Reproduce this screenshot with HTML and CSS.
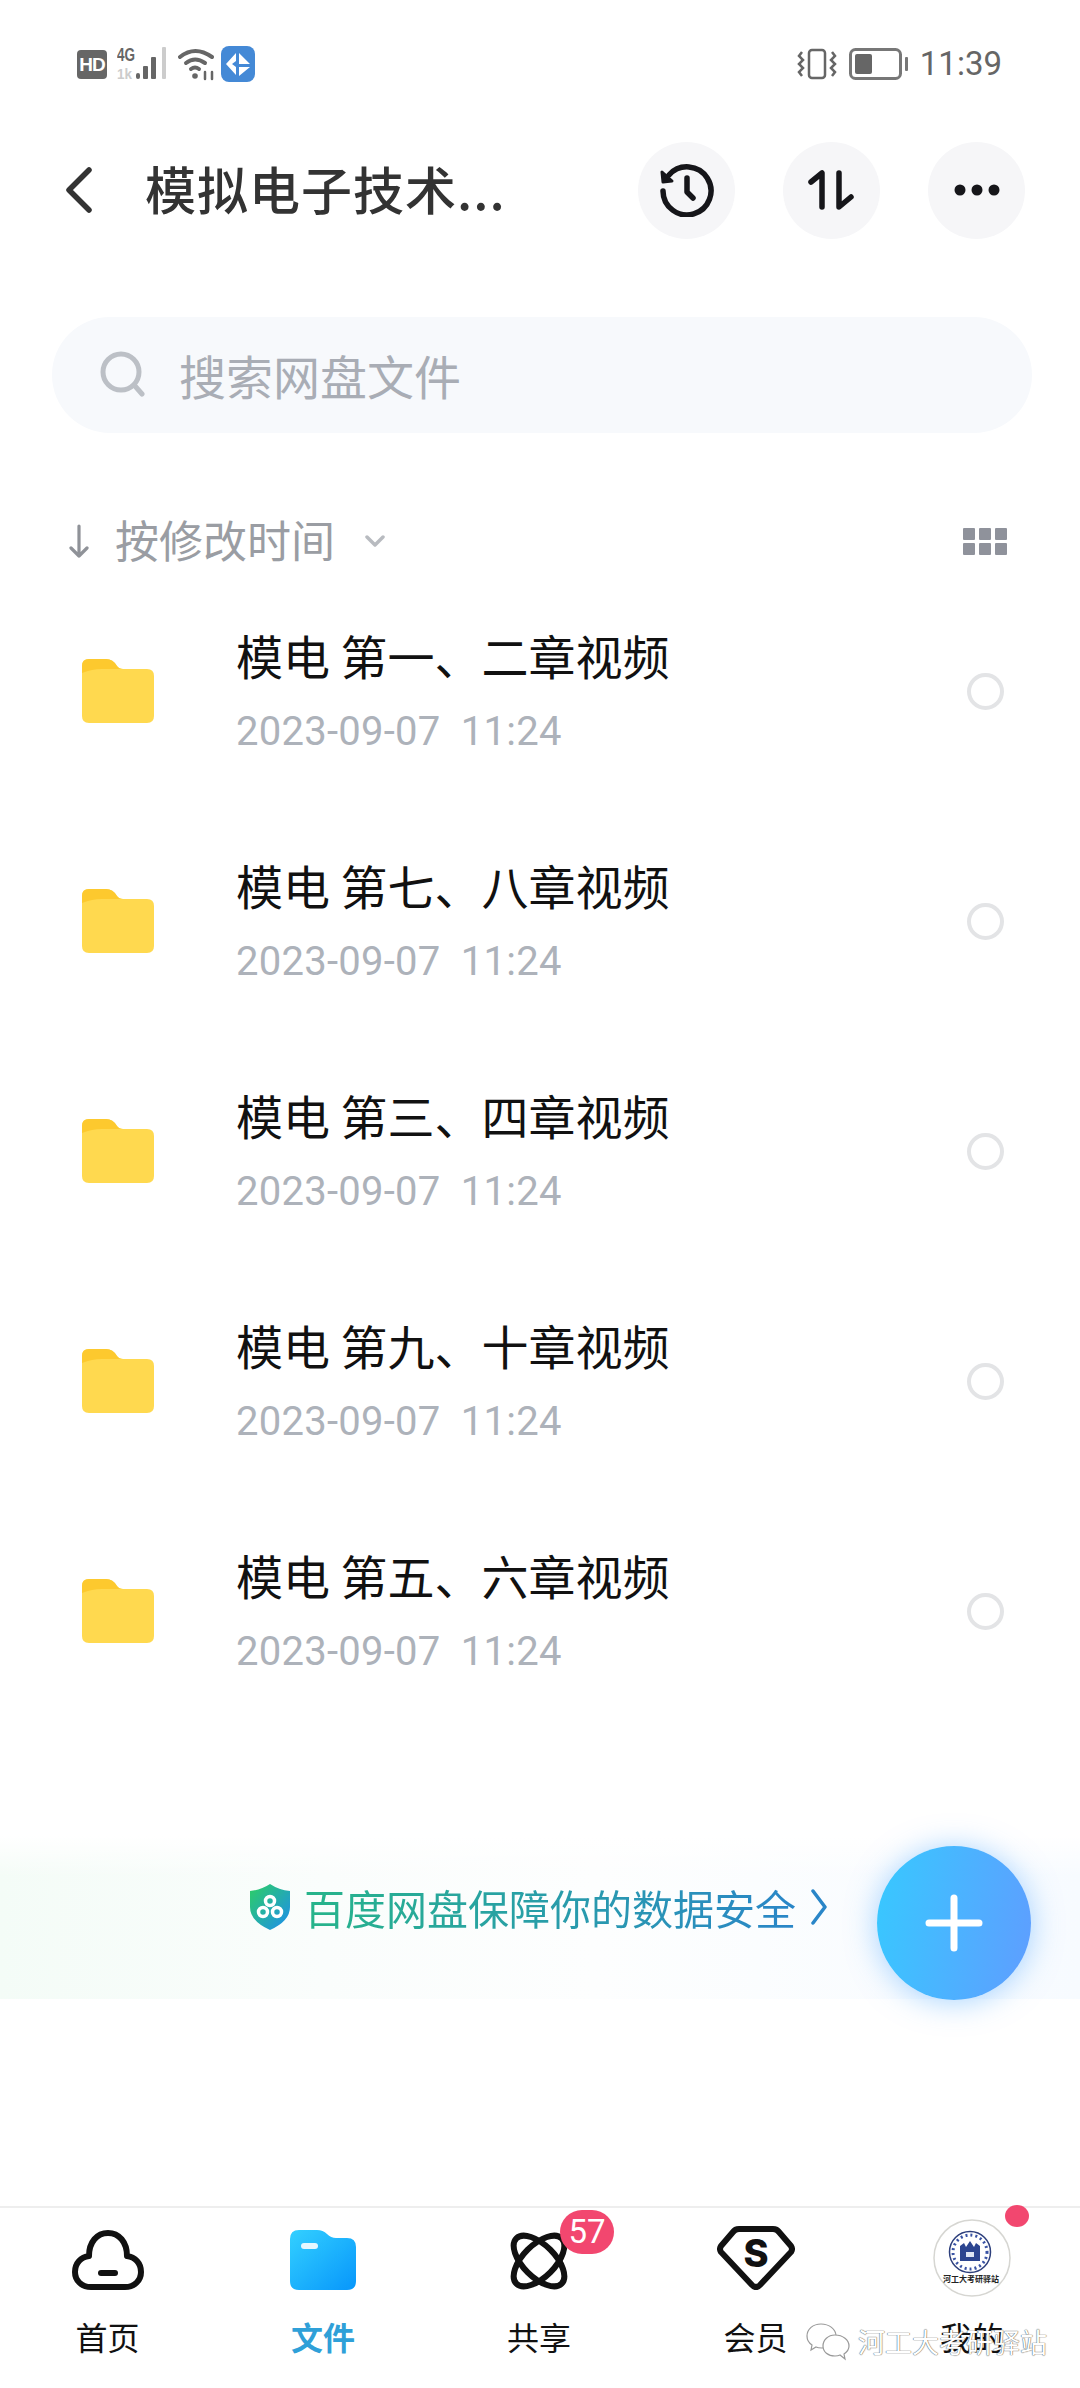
FILE: index.html
```html
<!DOCTYPE html>
<html lang="zh-CN">
<head>
  <meta charset="UTF-8">
  <meta name="viewport" content="width=device-width, initial-scale=1.0">
  <title>模拟电子技术</title>
  <link rel="stylesheet" href="styles.css">
</head>
<body>
<div class="page">
  <div class="status-bar">
    <div class="status-left">
      <span class="hd">HD</span>
      <svg class="signal" width="50" height="36" viewBox="0 0 50 36">
        <text x="0" y="15" class="net-top" textLength="18" lengthAdjust="spacingAndGlyphs">4G</text>
        <text x="0" y="33" class="net-low" textLength="15" lengthAdjust="spacingAndGlyphs">1k</text>
        <rect x="19" y="27" width="4" height="6" rx="2" fill="#666"/>
        <rect x="26" y="20" width="5" height="13" rx="1" fill="#666"/>
        <rect x="34" y="11" width="5" height="22" rx="1" fill="#666"/>
        <rect x="45" y="1" width="4" height="32" rx="1" fill="#ccc"/>
      </svg>
      <svg class="wifi" width="38" height="34" viewBox="0 0 38 34" fill="none" stroke="#666" stroke-width="4" stroke-linecap="round">
        <path d="M2 10 Q17 -2 34 10"/>
        <path d="M8 16 Q17 9 27 16"/>
        <path d="M13 22 Q17 19 21 22"/>
        <circle cx="17" cy="29" r="2.8" fill="#666" stroke="none"/>
        <path d="M27 25 v7 M34 25 v7" stroke-width="2.5"/>
      </svg>
      <svg class="app-icon" width="34" height="36" viewBox="0 0 34 36">
        <rect width="34" height="36" rx="8" fill="#4489d6"/>
        <path d="M5 18 L15 7 L15 15 L11 18 L15 21 L15 29 Z" fill="#fff"/>
        <path d="M18 7 L29 18 L18 18 Z M18 21 L29 21 L18 30 Z" fill="#fff"/>
      </svg>
    </div>
    <div class="status-right">
      <svg width="40" height="32" viewBox="0 0 40 32" fill="none" stroke="#666" stroke-width="2.5">
        <rect x="12" y="2" width="16" height="28" rx="3"/>
        <path d="M5 4 L2 8 L6 12 L2 16 L6 20 L2 24 L5 28 M35 4 L38 8 L34 12 L38 16 L34 20 L38 24 L35 28"/>
      </svg>
      <svg class="battery" width="60" height="32" viewBox="0 0 60 32">
        <rect x="1.5" y="1.5" width="50" height="29" rx="5" fill="none" stroke="#777" stroke-width="3"/>
        <rect x="6" y="6" width="17" height="20" rx="2" fill="#666"/>
        <rect x="56" y="9" width="3" height="14" rx="1" fill="#777"/>
      </svg>
      <span class="clock">11:39</span>
    </div>
  </div>

  <header class="top-bar">
    <svg class="back" width="30" height="48" viewBox="0 0 30 48" fill="none" stroke="#333" stroke-width="5.5" stroke-linecap="round" stroke-linejoin="round">
      <path d="M25 4 L5 24 L25 44"/>
    </svg>
    <h1 class="title">模拟电子技术...</h1>
    <div class="top-actions">
      <button class="round-btn">
        <svg width="54" height="54" viewBox="0 0 54 54" fill="none" stroke="#16161a" stroke-width="5.5" stroke-linecap="round" stroke-linejoin="round">
          <path d="M3 28 A24 24 0 1 0 9 12"/>
          <path d="M2 9 L3 19 L12 18 Z" fill="#16161a" stroke-width="3"/>
          <path d="M27 15 V29 L33 35"/>
        </svg>
      </button>
      <button class="round-btn">
        <svg width="48" height="48" viewBox="0 0 48 48" fill="none" stroke="#16161a" stroke-width="5.5" stroke-linecap="round" stroke-linejoin="round">
          <path d="M3 16 L14 7 V41"/>
          <path d="M31 7 V41 L43 31"/>
        </svg>
      </button>
      <button class="round-btn">
        <svg width="48" height="14" viewBox="0 0 48 14" fill="#16161a">
          <circle cx="7" cy="7" r="5.5"/><circle cx="24" cy="7" r="5.5"/><circle cx="41" cy="7" r="5.5"/>
        </svg>
      </button>
    </div>
  </header>

  <div class="search">
    <svg width="46" height="46" viewBox="0 0 46 46" fill="none" stroke="#bcc0c6" stroke-width="5" stroke-linecap="round">
      <circle cx="21" cy="21" r="18"/>
      <path d="M35 35 L42 43"/>
    </svg>
    <span>搜索网盘文件</span>
  </div>

  <div class="sort-row">
    <svg width="20" height="34" viewBox="0 0 20 34" fill="none" stroke="#8f9298" stroke-width="3.2" stroke-linecap="round" stroke-linejoin="round">
      <path d="M10 2 V32 M2 24 L10 32 L18 24"/>
    </svg>
    <span class="sort-label">按修改时间</span>
    <svg class="sort-caret" width="20" height="12" viewBox="0 0 20 12" fill="none" stroke="#b8bbc0" stroke-width="3.5" stroke-linecap="round" stroke-linejoin="round">
      <path d="M2 2 L10 10 L18 2"/>
    </svg>
    <div class="grid-icon">
      <i></i><i></i><i></i><i></i><i></i><i></i>
    </div>
  </div>

  <ul class="file-list">
    <li class="file-row">
      <svg class="folder" width="72" height="64" viewBox="0 0 72 64"><path d="M0 7 Q0 0 7 0 H24 Q31 0 35 7 Q37 10 41 10 H65 Q72 10 72 17 V57 Q72 64 65 64 H7 Q0 64 0 57 Z" fill="#ffd94f"/><path d="M0 7 Q0 0 7 0 H24 Q31 0 35 7 Q37 10 41 10 H20 Q10 10 0 14 Z" fill="#fdc92e"/></svg>
      <div class="file-info">
        <div class="file-name">模电 第一、二章视频</div>
        <div class="file-date">2023-09-07&nbsp; 11:24</div>
      </div>
      <span class="radio"></span>
    </li>
    <li class="file-row">
      <svg class="folder" width="72" height="64" viewBox="0 0 72 64"><path d="M0 7 Q0 0 7 0 H24 Q31 0 35 7 Q37 10 41 10 H65 Q72 10 72 17 V57 Q72 64 65 64 H7 Q0 64 0 57 Z" fill="#ffd94f"/><path d="M0 7 Q0 0 7 0 H24 Q31 0 35 7 Q37 10 41 10 H20 Q10 10 0 14 Z" fill="#fdc92e"/></svg>
      <div class="file-info">
        <div class="file-name">模电 第七、八章视频</div>
        <div class="file-date">2023-09-07&nbsp; 11:24</div>
      </div>
      <span class="radio"></span>
    </li>
    <li class="file-row">
      <svg class="folder" width="72" height="64" viewBox="0 0 72 64"><path d="M0 7 Q0 0 7 0 H24 Q31 0 35 7 Q37 10 41 10 H65 Q72 10 72 17 V57 Q72 64 65 64 H7 Q0 64 0 57 Z" fill="#ffd94f"/><path d="M0 7 Q0 0 7 0 H24 Q31 0 35 7 Q37 10 41 10 H20 Q10 10 0 14 Z" fill="#fdc92e"/></svg>
      <div class="file-info">
        <div class="file-name">模电 第三、四章视频</div>
        <div class="file-date">2023-09-07&nbsp; 11:24</div>
      </div>
      <span class="radio"></span>
    </li>
    <li class="file-row">
      <svg class="folder" width="72" height="64" viewBox="0 0 72 64"><path d="M0 7 Q0 0 7 0 H24 Q31 0 35 7 Q37 10 41 10 H65 Q72 10 72 17 V57 Q72 64 65 64 H7 Q0 64 0 57 Z" fill="#ffd94f"/><path d="M0 7 Q0 0 7 0 H24 Q31 0 35 7 Q37 10 41 10 H20 Q10 10 0 14 Z" fill="#fdc92e"/></svg>
      <div class="file-info">
        <div class="file-name">模电 第九、十章视频</div>
        <div class="file-date">2023-09-07&nbsp; 11:24</div>
      </div>
      <span class="radio"></span>
    </li>
    <li class="file-row">
      <svg class="folder" width="72" height="64" viewBox="0 0 72 64"><path d="M0 7 Q0 0 7 0 H24 Q31 0 35 7 Q37 10 41 10 H65 Q72 10 72 17 V57 Q72 64 65 64 H7 Q0 64 0 57 Z" fill="#ffd94f"/><path d="M0 7 Q0 0 7 0 H24 Q31 0 35 7 Q37 10 41 10 H20 Q10 10 0 14 Z" fill="#fdc92e"/></svg>
      <div class="file-info">
        <div class="file-name">模电 第五、六章视频</div>
        <div class="file-date">2023-09-07&nbsp; 11:24</div>
      </div>
      <span class="radio"></span>
    </li>
  </ul>

  <div class="safe-banner">
    <svg width="42" height="48" viewBox="0 0 42 48">
      <defs>
        <linearGradient id="shield" x1="0" y1="0" x2="1" y2="1">
          <stop offset="0" stop-color="#2dcf63"/>
          <stop offset="1" stop-color="#1d8df0"/>
        </linearGradient>
      </defs>
      <path d="M21 1 Q30 7 41 8 V24 Q41 38 21 47 Q1 38 1 24 V8 Q12 7 21 1 Z" fill="url(#shield)"/>
      <g fill="none" stroke="#fff" stroke-width="3.5">
        <circle cx="21" cy="18" r="4.5"/><circle cx="14" cy="29" r="4.5"/><circle cx="28" cy="29" r="4.5"/>
      </g>
    </svg>
    <span class="safe-text">百度网盘保障你的数据安全</span>
    <svg width="18" height="36" viewBox="0 0 18 36" fill="none" stroke="#2a86c8" stroke-width="3.5" stroke-linecap="round" stroke-linejoin="round">
      <path d="M3 2 L15 18 L3 34"/>
    </svg>
  </div>

  <button class="fab">
    <svg width="58" height="58" viewBox="0 0 58 58" stroke="#fff" stroke-width="7" stroke-linecap="round">
      <path d="M29 4 V54 M4 29 H54"/>
    </svg>
  </button>

  <nav class="tab-bar">
    <div class="tab">
      <svg width="72" height="60" viewBox="0 0 72 60" fill="none" stroke="#111" stroke-width="6" stroke-linecap="round" stroke-linejoin="round">
        <path d="M19 57 H53 C63 57 69 50 69 42 C69 33 63 27 55 26 C55 12 47 3 36 3 C25 3 17 12 17 26 C9 27 3 33 3 42 C3 50 9 57 19 57 Z"/>
        <path d="M29 43 H43"/>
      </svg>
      <span>首页</span>
    </div>
    <div class="tab active">
      <svg width="66" height="60" viewBox="0 0 66 60">
        <defs>
          <linearGradient id="tabFolder" x1="0" y1="0" x2="1" y2="1">
            <stop offset="0" stop-color="#33d0ff"/>
            <stop offset="1" stop-color="#0796fb"/>
          </linearGradient>
        </defs>
        <path d="M0 9 Q0 0 9 0 H27 Q33 0 37 4 Q41 8 46 8 H57 Q66 8 66 17 V51 Q66 60 57 60 H9 Q0 60 0 51 Z" fill="url(#tabFolder)"/>
        <rect x="11" y="13" width="17" height="6" rx="3" fill="#e4f7ff"/>
      </svg>
      <span>文件</span>
    </div>
    <div class="tab">
      <div class="tab-icon">
        <svg width="58" height="58" viewBox="0 0 58 58" fill="none" stroke="#111" stroke-width="6">
          <ellipse cx="29" cy="29" rx="32" ry="16" transform="rotate(45 29 29)"/>
          <ellipse cx="29" cy="29" rx="32" ry="16" transform="rotate(-45 29 29)"/>
        </svg>
        <span class="count-badge">57</span>
      </div>
      <span>共享</span>
    </div>
    <div class="tab">
      <svg width="78" height="64" viewBox="0 0 78 64" fill="none" stroke="#111" stroke-width="6" stroke-linejoin="round">
        <path d="M22 3 H56 Q60 3 62 6 L74 20 Q76 23 74 26 L43 59 Q39 63 35 59 L4 26 Q2 23 4 20 L16 6 Q18 3 22 3 Z"/>
        <text x="39" y="41" class="vip-s">S</text>
      </svg>
      <span>会员</span>
    </div>
    <div class="tab">
      <div class="tab-icon avatar">
        <svg width="78" height="78" viewBox="0 0 78 78">
          <circle cx="39" cy="39" r="38" fill="#fff" stroke="#d6d6d2" stroke-width="1.5"/>
          <circle cx="37" cy="33" r="20.5" fill="#fff" stroke="#2d3f7c" stroke-width="1.5"/>
          <circle cx="37" cy="33" r="17" fill="none" stroke="#3953a4" stroke-width="3" stroke-dasharray="2 3"/>
          <path d="M27 42 V27 L31 24 L33 28 L37 22 L41 28 L43 24 L47 27 V42 Z" fill="#2c4590"/>
          <rect x="33" y="33" width="8" height="5" fill="#dfe6f5"/>
          <text x="38" y="63" class="avatar-text">河工大考研驿站</text>
        </svg>
        <span class="dot"></span>
      </div>
      <span>我的</span>
    </div>
  </nav>

  <div class="watermark">
    <svg width="44" height="38" viewBox="0 0 44 38" fill="#fff" stroke="#999" stroke-width="1.2">
      <path d="M15 1 C7 1 1 6 1 13 C1 17 3 20 6 22 L5 27 L10 24 C12 25 14 25 16 25 C23 25 30 20 30 13 C30 6 23 1 15 1 Z"/>
      <path d="M29 12 C22 12 17 17 17 23 C17 29 22 33 29 33 C31 33 32 33 34 32 L39 36 L38 31 C41 29 43 26 43 23 C43 17 37 12 29 12 Z"/>
    </svg>
    <span>河工大考研驿站</span>
  </div>
</div>
</body>
</html>
```
FILE: styles.css
```css
* {
  box-sizing: border-box;
}
body {
  margin: 0;
  background: #fff;
  font-family: "Noto Sans CJK SC", "Noto Sans", sans-serif;
}
ul {
  list-style: none;
  margin: 0;
  padding: 0;
}
button {
  border: 0;
  padding: 0;
}
.page {
  position: relative;
  width: 1080px;
  height: 2388px;
  overflow: hidden;
  display: flex;
  flex-direction: column;
}

/* status bar */
.status-bar {
  height: 128px;
  padding: 45px 78px 0 77px;
  display: flex;
  justify-content: space-between;
  align-items: flex-start;
}
.status-left,
.status-right {
  height: 38px;
  display: flex;
  align-items: center;
}
.status-left .signal {
  margin-left: 10px;
}
.status-left .wifi {
  margin-left: 11px;
}
.status-left .app-icon {
  margin-left: 5px;
}
.hd {
  width: 30px;
  height: 29px;
  border-radius: 4px;
  background: #666;
  color: #fff;
  font: bold 19px/29px "Liberation Sans", sans-serif;
  text-align: center;
  letter-spacing: -1px;
}
.net-top {
  font: bold 18px "Liberation Sans", sans-serif;
  fill: #666;
}
.net-low {
  font: bold 15px "Liberation Sans", sans-serif;
  fill: #ccc;
}
.battery {
  margin-left: 12px;
}
.clock {
  margin-left: 11px;
  font: 33px/38px Roboto, sans-serif;
  color: #666;
}

/* title row */
.top-bar {
  height: 124px;
  padding: 0 55px 0 64px;
  display: flex;
  align-items: center;
}
.title {
  margin: 0 0 5px 51px;
  font-size: 51px;
  font-weight: 500;
  letter-spacing: 1px;
  color: #333;
}
.top-actions {
  margin-left: auto;
  display: flex;
  gap: 48px;
}
.round-btn {
  width: 97px;
  height: 97px;
  border-radius: 50%;
  background: #f6f6f8;
  display: flex;
  align-items: center;
  justify-content: center;
}

/* search */
.search {
  margin: 65px 48px 0 52px;
  height: 116px;
  border-radius: 58px;
  background: #f7f9fc;
  padding: 0 0 2px 48px;
  display: flex;
  align-items: center;
  gap: 33px;
  font-size: 47px;
  color: #a9adb5;
}

/* sort */
.sort-row {
  margin-top: 78px;
  height: 60px;
  padding: 0 73px 0 69px;
  display: flex;
  align-items: center;
  font-size: 44px;
  color: #9a9da3;
}
.sort-label {
  margin: 0 0 4px 26px;
}
.sort-caret {
  margin-left: 30px;
}
.grid-icon {
  margin-left: auto;
  display: grid;
  grid-template-columns: repeat(3, 12px);
  grid-auto-rows: 12px;
  gap: 3px 4px;
}
.grid-icon i {
  background: #8f929b;
  border-radius: 1px;
}

/* list */
.file-list {
  margin-top: 5px;
}
.file-row {
  height: 230px;
  padding: 0 76px 0 82px;
  display: flex;
  align-items: center;
}
.folder {
  flex: none;
}
.file-info {
  margin: 0 0 3px 82px;
}
.file-name {
  font-size: 47px;
  line-height: 60px;
  color: #111;
}
.file-date {
  margin-top: 24px;
  font: 40px/46px Roboto, sans-serif;
  letter-spacing: 0.25px;
  color: #adb2ba;
}
.radio {
  margin-left: auto;
  width: 37px;
  height: 37px;
  border-radius: 50%;
  border: 4px solid #e3e4e6;
}

/* safety banner */
.safe-banner {
  margin-top: 110px;
  height: 163px;
  padding: 0 0 22px 249px;
  display: flex;
  align-items: center;
  background:
    linear-gradient(180deg, #fff 0, rgba(255, 255, 255, 0) 25%),
    linear-gradient(90deg, #f4fcf7 0%, #fafdfc 30%, #fdfefe 55%, #f7fbff 100%);
}
.safe-banner svg:last-child {
  margin-left: 14px;
}
.safe-text {
  margin-left: 13px;
  font-size: 41px;
  background: linear-gradient(90deg, #27b48a, #2a86c8);
  -webkit-background-clip: text;
  background-clip: text;
  color: transparent;
}
.fab {
  position: absolute;
  left: 877px;
  top: 1846px;
  width: 154px;
  height: 154px;
  border-radius: 50%;
  background: linear-gradient(100deg, #37c9ff, #5f9dff);
  box-shadow: 0 2px 30px rgba(80, 170, 255, 0.5);
  display: flex;
  align-items: center;
  justify-content: center;
}

/* bottom tabs */
.tab-bar {
  margin-top: auto;
  height: 182px;
  border-top: 2px solid #eeeeee;
  display: grid;
  grid-template-columns: 215px 216px 216px 217px 216px;
}
.tab {
  height: 150px;
  display: flex;
  flex-direction: column;
  align-items: center;
  justify-content: flex-end;
  font-size: 32px;
  line-height: 44px;
  color: #111;
}
.tab > svg,
.tab-icon {
  margin-bottom: 24px;
}
.tab.active {
  color: #2fa0d8;
  font-weight: 700;
}
.tab-icon {
  position: relative;
  display: flex;
}
.avatar {
  margin-bottom: 17px;
}
.count-badge {
  position: absolute;
  left: 50px;
  top: -22px;
  width: 54px;
  height: 44px;
  border-radius: 22px;
  background: #f2476f;
  color: #fff;
  font: 33px/44px Roboto, sans-serif;
  text-align: center;
}
.dot {
  position: absolute;
  left: 72px;
  top: -14px;
  width: 24px;
  height: 22px;
  border-radius: 50%;
  background: #f2476f;
}
.vip-s {
  font: 800 38px Inter, sans-serif;
  fill: #111;
  stroke: none;
  text-anchor: middle;
}
.avatar-text {
  font-size: 8px;
  font-weight: 700;
  fill: #222;
  text-anchor: middle;
}

/* wechat mark over the tabs */
.watermark {
  position: absolute;
  left: 806px;
  top: 2323px;
  display: flex;
  align-items: center;
  gap: 8px;
  font-size: 27px;
  line-height: 38px;
  color: #fff;
  text-shadow: 0 0 1px #444, 0 0 1px #666;
}
```
